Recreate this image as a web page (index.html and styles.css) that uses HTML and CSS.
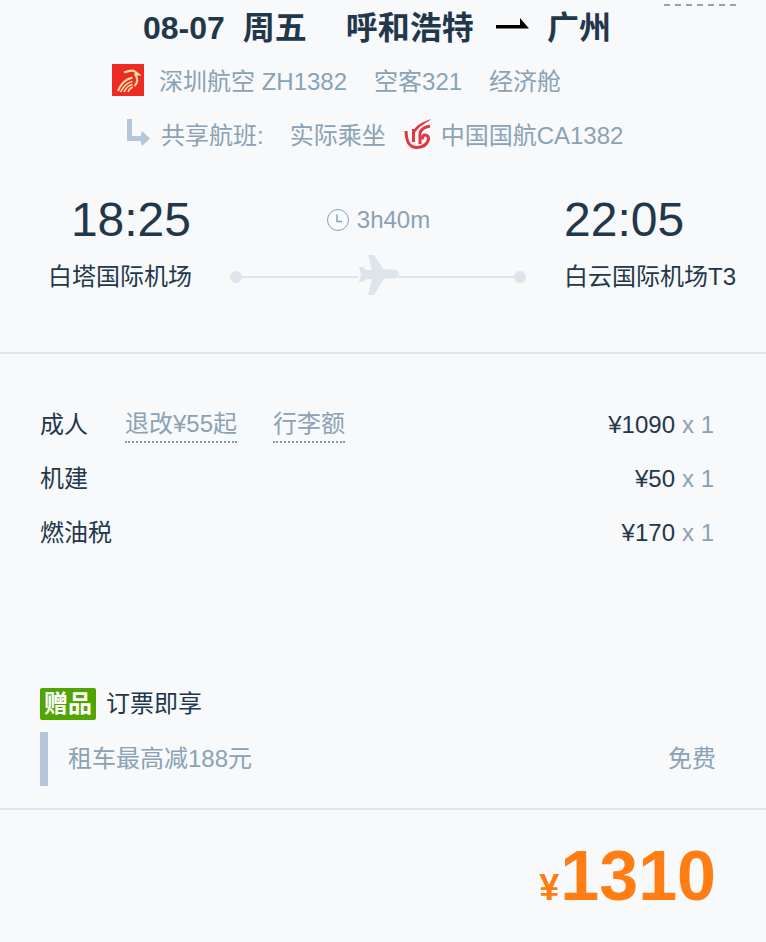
FILE: index.html
```html
<!DOCTYPE html>
<html lang="zh-CN">
<head>
    <meta charset="UTF-8">
    <meta name="viewport" content="width=device-width, initial-scale=1.0">
    <title>机票详情</title>
    <link rel="stylesheet" href="styles.css">
</head>
<body>
    <div class="page">
        <div class="top-link"></div>

        <div class="flight">
            <div class="title">
                <span>08-07</span>
                <span class="title-week">周五</span>
                <span class="title-from">呼和浩特</span>
                <svg class="title-arrow" width="34" height="12" viewBox="0 0 34 12"><path d="M0 7H24V0L33 10.5H0Z" fill="#000"/></svg>
                <span>广州</span>
            </div>
            <div class="info">
                <svg class="logo" width="32" height="32" viewBox="0 0 32 32">
                    <rect width="32" height="32" fill="#ee2a24"/>
                    <path d="M12 8.5C16 7 20 6 22 7L26.5 10.5L23.5 10.5C26 15 25.5 19 22.5 22M6 27C9 19 14 15 20.5 13.5" fill="none" stroke="#fbdf9e" stroke-width="2.2"/>
                    <path d="M8.5 28C11 23 15 18.5 20.5 17.5M12 28C14 24 17 21 20.5 20.5M16 28C17 25.5 18 24 21 23" fill="none" stroke="#fbdf9e" stroke-width="1.6"/>
                </svg>
                <span class="info-name">深圳航空 ZH1382</span>
                <span class="info-item">空客321</span>
                <span class="info-item">经济舱</span>
            </div>
            <div class="share">
                <svg class="share-arrow" width="24" height="28" viewBox="0 0 24 28"><path d="M2.5 0V19.5H18" fill="none" stroke="#b5c6d8" stroke-width="5"/><path d="M15 12L23 19.5L15 27L14 24V15Z" fill="#b5c6d8"/></svg>
                <span class="share-label">共享航班:</span>
                <span class="share-real">实际乘坐</span>
                <svg class="logo-ca" width="28" height="32" viewBox="0 0 28 32">
                    <path d="M2 12C2.5 21 4 28 12 28.5C18 28.5 23 26 24.5 20.5C25 17.5 23 15.5 20.5 16C18.5 16.5 18 19 19.5 20" fill="none" stroke="#e0383e" stroke-width="3"/>
                    <path d="M9.5 10V23M16 25V14C17 10 21 8 26 7" fill="none" stroke="#e0383e" stroke-width="3"/>
                    <path d="M9.5 12C11 7 18 3 27 0C23 4 17 6 14 10C12.5 11.5 11 13 9.5 16Z" fill="#e0383e"/>
                </svg>
                <span>中国国航CA1382</span>
            </div>
            <div class="times">
                <div class="point">
                    <div class="time">18:25</div>
                    <div class="airport">白塔国际机场</div>
                </div>
                <div class="route">
                    <div class="duration">
                        <svg class="clock" width="24" height="24" viewBox="0 0 24 24"><circle cx="12" cy="12" r="10.5" fill="none" stroke="#8aa2b4" stroke-width="1"/><path d="M11 6.5V13.5H16" fill="none" stroke="#8aa2b4" stroke-width="1.5"/></svg>
                        <span>3h40m</span>
                    </div>
                    <div class="track">
                        <i class="dot"></i>
                        <i class="line"></i>
                        <svg class="plane" width="44" height="42" viewBox="0 0 44 42"><path d="M12 1H18L28 15.5H38C41 15.5 43 18 43 20C43 22 41 24.5 38 24.5H28L18 41H12L16 25H10L7 28H3L5 20.5L3 13H7L10 16H16Z" fill="#dde4ec"/></svg>
                        <i class="line"></i>
                        <i class="dot"></i>
                    </div>
                </div>
                <div class="point point-end">
                    <div class="time">22:05</div>
                    <div class="airport">白云国际机场T3</div>
                </div>
            </div>
        </div>

        <div class="prices">
            <div class="price-row">
                <span class="price-name">成人</span>
                <span class="price-tip">退改¥55起</span>
                <span class="price-tip">行李额</span>
                <span class="price-value">¥1090<em>x 1</em></span>
            </div>
            <div class="price-row">
                <span class="price-name">机建</span>
                <span class="price-value">¥50<em>x 1</em></span>
            </div>
            <div class="price-row">
                <span class="price-name">燃油税</span>
                <span class="price-value">¥170<em>x 1</em></span>
            </div>

            <div class="gift">
                <span class="gift-tag">赠品</span>
                <span class="gift-text">订票即享</span>
            </div>
            <div class="gift-item">
                <span>租车最高减188元</span>
                <span>免费</span>
            </div>
        </div>

        <div class="total">
            <span class="total-sign">¥</span>
            <span class="total-num">1310</span>
        </div>
    </div>
</body>
</html>
```

FILE: styles.css
```css
* {
    box-sizing: border-box;
}

body {
    margin: 0;
    background-color: #f7f9fb;
    color: #23374a;
    font-family: "Liberation Sans", "Noto Sans CJK SC", sans-serif;
    font-size: 24px;
    line-height: 34px;
}

.page {
    position: relative;
    width: 766px;
    height: 942px;
    overflow: hidden;
}

.top-link {
    position: absolute;
    top: 4px;
    left: 664px;
    width: 72px;
    height: 2px;
    background: repeating-linear-gradient(90deg, #8ea4b5 0, #8ea4b5 6px, transparent 6px, transparent 11px);
}

.flight {
    height: 354px;
    border-bottom: 2px solid #e2e6ea;
}

.title {
    display: flex;
    align-items: center;
    height: 56px;
    padding-left: 143px;
    font-size: 32px;
    font-weight: 700;
    white-space: nowrap;
}

.title-week {
    margin-left: 18px;
}

.title-from {
    margin-left: 39px;
}

.title-arrow {
    margin: 0 17px 8px 22px;
}

.info {
    display: flex;
    align-items: center;
    height: 48px;
    padding-left: 112px;
    color: #8aa2b4;
    white-space: nowrap;
}

.info span {
    padding-top: 4px;
}

.info-name {
    margin-left: 15px;
}

.info-item {
    margin-left: 27px;
}

.share {
    display: flex;
    align-items: center;
    height: 60px;
    padding-left: 127px;
    color: #8aa2b4;
    white-space: nowrap;
}

.share span {
    padding-top: 4px;
}

.share-arrow {
    margin: 0 10px 2px 0;
    filter: blur(0.7px);
}

.share-real {
    margin-left: 26px;
}

.logo-ca {
    margin: 2px 9px 0 18px;
}

.times {
    display: flex;
    gap: 38px;
    padding: 26px 0 0 48px;
}

.point {
    width: 143px;
    text-align: right;
}

.point-end {
    width: 172px;
    text-align: left;
}

.time {
    font-size: 48px;
    line-height: 60px;
}

.airport {
    margin-top: 10px;
    white-space: nowrap;
}

.route {
    width: 296px;
    margin-left: 1px;
}

.duration {
    display: flex;
    justify-content: center;
    align-items: center;
    gap: 7px;
    height: 60px;
    color: #8aa2b4;
}

.track {
    display: flex;
    align-items: center;
    height: 44px;
    margin-top: 5px;
}

.dot {
    width: 12px;
    height: 12px;
    border-radius: 50%;
    background-color: #dde4ec;
}

.line {
    flex: 1;
    height: 2px;
    background-color: #dde4ec;
}

.plane {
    margin: -4px -2px 0;
}

.prices {
    height: 456px;
    padding: 44px 50px 0 40px;
    border-bottom: 2px solid #e2e6ea;
}

.price-row {
    display: flex;
    align-items: center;
    height: 54px;
}

.price-tip {
    margin-left: 37px;
    color: #8aa2b4;
    border-bottom: 2px dotted #7f9cb0;
}

.price-tip + .price-tip {
    margin-left: 36px;
}

.price-value {
    margin-left: auto;
    margin-right: 2px;
}

.price-value em {
    margin-left: 7px;
    color: #8aa2b4;
    font-style: normal;
}

.gift {
    display: flex;
    align-items: center;
    gap: 10px;
    height: 32px;
    margin-top: 128px;
}

.gift-tag {
    width: 56px;
    height: 32px;
    border-radius: 2px;
    background-color: #52a500;
    color: #fff;
    font-weight: 700;
    line-height: 32px;
    text-align: center;
}

.gift-item {
    display: flex;
    justify-content: space-between;
    align-items: center;
    height: 54px;
    margin-top: 12px;
    padding-left: 20px;
    color: #8aa2b4;
    border-left: 8px solid #b5c6dc;
}

.total {
    display: flex;
    justify-content: flex-end;
    align-items: baseline;
    padding: 20px 50px 0 0;
    color: #ff7d13;
    font-weight: 700;
    line-height: 92px;
}

.total-sign {
    font-size: 36px;
    margin-right: 1px;
}

.total-num {
    font-size: 70px;
}
```
